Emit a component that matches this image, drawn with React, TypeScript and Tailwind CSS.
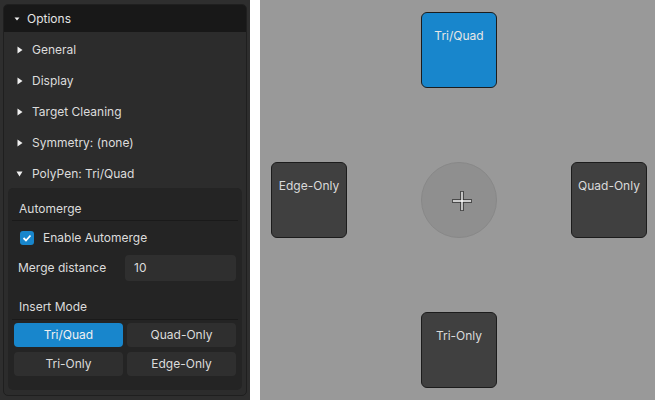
import React from "react";

const font = { fontFamily: "Inter, 'Noto Sans', sans-serif" };

function TriRight() {
  return (
    <svg width="6" height="8" viewBox="0 0 6 8" className="shrink-0">
      <path d="M0.5 0.5 L5.5 4 L0.5 7.5 Z" fill="#f0f0f0" />
    </svg>
  );
}
function TriDown({ small }: { small?: boolean }) {
  return small ? (
    <svg width="6" height="4" viewBox="0 0 6 4" className="shrink-0">
      <path d="M0.5 0.5 L5.5 0.5 L3 3.5 Z" fill="#f0f0f0" />
    </svg>
  ) : (
    <svg width="7" height="6" viewBox="0 0 7 6" className="shrink-0">
      <path d="M0.5 0.5 L6.5 0.5 L3.5 5.5 Z" fill="#f0f0f0" />
    </svg>
  );
}

function Row({ label, open }: { label: string; open?: boolean }) {
  return (
    <div className="h-[31px] flex items-center pl-[12px] gap-[9px]">
      <div className="w-[7px] flex justify-center">{open ? <TriDown /> : <TriRight />}</div>
      <span className="text-[12px] text-[#dcdcdc]">{label}</span>
    </div>
  );
}

function PieBox({ label, active }: { label: string; active?: boolean }) {
  return (
    <div
      className={`w-[76px] h-[76px] rounded-[6px] border border-[#1c1c1c] flex justify-center pt-[14px] text-[12px] ${
        active ? "bg-[#1886cc] text-[#e6e6e6]" : "bg-[#404040] text-[#dadada]"
      }`}
    >
      {label}
    </div>
  );
}

export default function App() {
  return (
    <div className="w-[655px] h-[400px] flex overflow-hidden" style={font}>
      <div className="w-[250px] h-full bg-[#2e2e2e] pl-[3px] pt-[4px]">
        <div className="w-[244px] h-[392px] rounded-[5px] border border-[#1f1f1f] bg-[#2c2c2c] overflow-hidden flex flex-col">
          <div className="h-[27px] bg-[#181818] flex items-center pl-[10px] gap-[7px] shrink-0">
            <TriDown small />
            <span className="text-[12px] text-[#e4e4e4]">Options</span>
          </div>
          <div className="pt-[2px]">
            <Row label="General" />
            <Row label="Display" />
            <Row label="Target Cleaning" />
            <Row label="Symmetry: (none)" />
            <Row label="PolyPen: Tri/Quad" open />
          </div>
          <div className="mx-[4px] mt-[-1px] h-[202px] rounded-[5px] bg-[#242424] px-[4px] pt-[10px]">
            <div className="h-[23px] flex items-center pl-[7px] border-b border-[#1a1a1a] text-[12px] text-[#dcdcdc]">
              Automerge
            </div>
            <div className="h-[34px] flex items-center pl-[8px] gap-[9px]">
              <div className="w-[14px] h-[14px] rounded-[3px] bg-[#1886cc] flex items-center justify-center">
                <svg width="10" height="10" viewBox="0 0 10 10">
                  <path d="M1.5 5 L4 7.5 L8.5 2.5" stroke="#fff" strokeWidth="1.8" fill="none" />
                </svg>
              </div>
              <span className="text-[12px] text-[#dcdcdc]">Enable Automerge</span>
            </div>
            <div className="h-[26px] flex items-center pl-[6px]">
              <span className="w-[107px] text-[12px] text-[#dcdcdc]">Merge distance</span>
              <div className="w-[111px] h-[26px] rounded-[4px] bg-[#2f2f2f] flex items-center pl-[9px] text-[12px] text-[#dcdcdc]">
                10
              </div>
            </div>
            <div className="mt-[14px] h-[25px] flex items-center pl-[7px] border-b border-[#1a1a1a] text-[12px] text-[#dcdcdc]">
              Insert Mode
            </div>
            <div className="grid grid-cols-2 gap-x-[4px] gap-y-[5px] px-[2px] pt-[3px] text-[12px]">
              <div className="h-[24px] rounded-[4px] bg-[#1886cc] text-[#f0f0f0] flex items-center justify-center">Tri/Quad</div>
              <div className="h-[24px] rounded-[4px] bg-[#2f2f2f] text-[#dcdcdc] flex items-center justify-center">Quad-Only</div>
              <div className="h-[24px] rounded-[4px] bg-[#2f2f2f] text-[#dcdcdc] flex items-center justify-center">Tri-Only</div>
              <div className="h-[24px] rounded-[4px] bg-[#2f2f2f] text-[#dcdcdc] flex items-center justify-center">Edge-Only</div>
            </div>
          </div>
        </div>
      </div>
      <div className="w-[10px] h-full bg-white" />
      <div className="flex-1 h-full bg-[#999999] pl-[11px] pt-[12px]">
        <div className="grid grid-cols-[76px_76px_76px] grid-rows-[76px_76px_76px] gap-[74px]">
          <div />
          <PieBox label="Tri/Quad" active />
          <div />
          <PieBox label="Edge-Only" />
          <div className="w-[76px] h-[76px] rounded-full bg-[#8f8f8f] border border-[#888888] flex items-center justify-center">
            <svg width="24" height="24" viewBox="0 0 24 24" className="ml-[5px] mt-[2px]">
              <path d="M12 2 V22 M2 12 H22" stroke="#333" strokeWidth="3.5" />
              <path d="M12 2.8 V21.2 M2.8 12 H21.2" stroke="#fff" strokeWidth="1.4" />
            </svg>
          </div>
          <PieBox label="Quad-Only" />
          <div />
          <PieBox label="Tri-Only" />
          <div />
        </div>
      </div>
    </div>
  );
}
